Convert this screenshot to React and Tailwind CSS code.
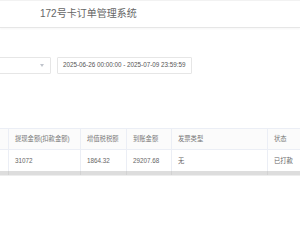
const columns = [
  { key: 'pre', w: 'w-[19px]', label: '', value: '' },
  { key: 'amount', w: 'w-[72px]', label: '提现金额(扣款金额)', value: '31072' },
  { key: 'tax', w: 'w-[46px]', label: '增值税税额', value: '1864.32' },
  { key: 'arrive', w: 'w-[45px]', label: '到账金额', value: '29207.68' },
  { key: 'invoice', w: 'w-[96px]', label: '发票类型', value: '无' },
  { key: 'status', w: 'w-[70px]', label: '状态', value: '已打款' },
];

export default function App() {
  return (
    <div className="w-[300px] h-[250px] overflow-hidden bg-white text-[#606266] [font-family:'Liberation_Sans','Noto_Sans_CJK_SC',sans-serif]">
      {/* top bar */}
      <div className="h-[28px] border-t border-[#f2f2f2] border-b border-b-[#e6e6e6] shadow-[0_1px_2px_rgba(0,0,0,0.04)] flex items-center pl-[40px]">
        <span className="text-[10px] text-[#666] leading-none">172号卡订单管理系统</span>
      </div>

      {/* filters */}
      <div className="mt-[29px] flex gap-[6px] -ml-[20px]">
        <div className="w-[71px] h-[17px] border border-[#e6e6e6] rounded-[1px] flex items-center justify-end pr-[6px]">
          <div className="w-0 h-0 border-l-[2.5px] border-r-[2.5px] border-t-[3px] border-l-transparent border-r-transparent border-t-[#c0c4cc]" />
        </div>
        <div className="w-[135px] h-[17px] border border-[#e6e6e6] rounded-[1px] flex items-center pl-[5px]">
          <span className="text-[6.3px] text-[#555] whitespace-nowrap leading-none">2025-06-26 00:00:00 - 2025-07-09 23:59:59</span>
        </div>
      </div>

      {/* table */}
      <div className="mt-[54px] -ml-[10px] w-[360px] border-t border-[#ebeef5]">
        <div className="flex h-[21px] bg-[#fbfbfb] border-b border-[#ebeef5]">
          {columns.map((c) => (
            <div key={c.key} className={`${c.w} shrink-0 border-r border-[#ebeef5] flex items-center pl-[6px] text-[6.3px] text-[#777] whitespace-nowrap`}>
              {c.label}
            </div>
          ))}
        </div>
        <div className="flex h-[21px]">
          {columns.map((c) => (
            <div key={c.key} className={`${c.w} shrink-0 border-r border-[#ebeef5] flex items-center pl-[6px] text-[6.3px] text-[#666] whitespace-nowrap`}>
              {c.value}
            </div>
          ))}
        </div>
        {/* horizontal scrollbar */}
        <div className="flex h-[4px] bg-[#dddddd]">
          {columns.map((c) => (
            <div key={c.key} className={`${c.w} shrink-0 border-r border-[#d2d2d2]`} />
          ))}
        </div>
        <div className="h-[1px] bg-[#ededed]" />
      </div>
    </div>
  );
}
